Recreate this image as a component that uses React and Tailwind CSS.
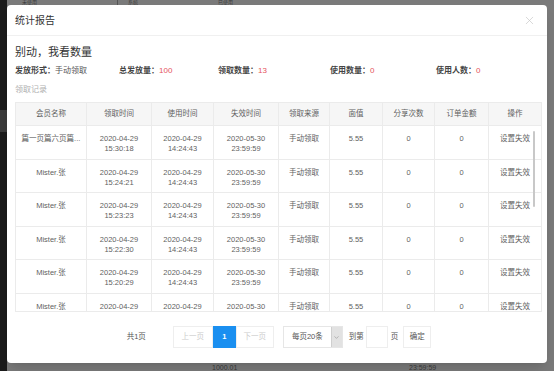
import React from 'react';
import { X, ChevronDown } from 'lucide-react';

const cols = ['会员名称', '领取时间', '使用时间', '失效时间', '领取来源', '面值', '分享次数', '订单金额', '操作'];

const rows = [
  { name: '篇一页篇六页篇...', got: '15:30:18' },
  { name: 'Mister.张', got: '15:24:21' },
  { name: 'Mister.张', got: '15:23:23' },
  { name: 'Mister.张', got: '15:22:30' },
  { name: 'Mister.张', got: '15:20:29' },
  { name: 'Mister.张', got: '15:17:45' },
];

const stats = [
  { label: '发放形式：', value: '手动领取', plain: true, w: 'w-[104px]' },
  { label: '总发放量：', value: '100', w: 'w-[99px]' },
  { label: '领取数量：', value: '13', w: 'w-[112px]' },
  { label: '使用数量：', value: '0', w: 'w-[106px]' },
  { label: '使用人数：', value: '0', w: 'w-[90px]' },
];

const Cell = ({ children, last }) => (
  <div className={`pt-[8px] text-center leading-[10px] ${last ? '' : 'border-r border-[#ebebeb]'}`}>
    {children}
  </div>
);

const App = () => {
  return (
    <div className="relative w-[554px] h-[371px] overflow-hidden bg-[#7a7a7a] font-['Liberation_Sans','Noto_Sans_CJK_SC',sans-serif]">
      {/* page behind the mask */}
      <div className="absolute left-0 top-0 w-[7px] h-full bg-[#1b1b1b]">
        <div className="mt-[110px] h-[22px] bg-[#3a3a3a]" />
      </div>
      <div className="absolute left-[22px] top-0 flex gap-[80px] text-[5px] leading-[5px] text-[#3a3a3a]">
        <span>未使用</span>
        <span className="border-l border-[#555] pl-[10px]">系统</span>
        <span>已使用</span>
      </div>
      <div className="absolute left-[212px] top-[364px] text-[7px] leading-[7px] text-[#3a3a3a]">1000.01</div>
      <div className="absolute left-[409px] top-[364px] text-[7px] leading-[7px] text-[#3a3a3a]">23:59:59</div>

      {/* modal */}
      <div className="absolute left-[7px] top-[5px] w-[540px] h-[358px] bg-white rounded-[4px] shadow-lg flex flex-col">
        <div className="h-[31px] shrink-0 flex items-center justify-between px-[8px] border-b border-[#f0f0f0]">
          <span className="text-[10px] text-[#333]">统计报告</span>
          <X className="w-[13px] h-[13px] text-[#c4c4c4] mr-[3px]" strokeWidth={1.2} />
        </div>

        <div className="pl-[8px] pr-[5px]">
          <div className="mt-[9px] text-[11px] leading-[14px] text-[#333]">别动，我看数量</div>
          <div className="mt-[6px] flex text-[8px] leading-[12px]">
            {stats.map((s) => (
              <div key={s.label} className={`${s.w} shrink-0`}>
                <span className="font-bold text-[#444]">{s.label}</span>
                <span className={s.plain ? 'text-[#555]' : 'text-[#e5535d]'}>{s.value}</span>
              </div>
            ))}
          </div>
          <div className="mt-[7px] text-[8px] leading-[12px] text-[#b0b0b0]">领取记录</div>

          <div className="relative mt-[6px] border border-[#ebebeb] text-[7.5px] text-[#5f5f5f]">
            <div className="grid grid-cols-[71px_65px_62px_65px_51px_53px_52px_54px_52px] h-[23px] bg-[#f6f6f6] border-b border-[#ebebeb]">
              {cols.map((c, i) => (
                <div key={c} className={`flex items-center justify-center ${i < cols.length - 1 ? 'border-r border-[#ebebeb]' : ''}`}>
                  {c}
                </div>
              ))}
            </div>
            <div className="h-[185px] overflow-hidden">
              {rows.map((r, idx) => (
                <div key={idx} className="grid grid-cols-[71px_65px_62px_65px_51px_53px_52px_54px_52px] h-[33.5px] border-b border-[#ebebeb]">
                  <Cell>{r.name}</Cell>
                  <Cell>2020-04-29<br />{r.got}</Cell>
                  <Cell>2020-04-29<br />14:24:43</Cell>
                  <Cell>2020-05-30<br />23:59:59</Cell>
                  <Cell>手动领取</Cell>
                  <Cell>5.55</Cell>
                  <Cell>0</Cell>
                  <Cell>0</Cell>
                  <Cell last>设置失效</Cell>
                </div>
              ))}
            </div>
            <div className="absolute right-[6px] top-[28px] w-[2px] h-[76px] rounded-full bg-[#c8c8c8]" />
          </div>
        </div>

        {/* pagination */}
        <div className="mt-[14px] flex items-center justify-center text-[7.5px] text-[#555] pl-[4px]">
          <span className="mr-[27px]">共1页</span>
          <div className="flex h-[22px]">
            <div className="w-[40px] flex items-center justify-center border border-[#eeeeee] text-[#cccccc]">上一页</div>
            <div className="w-[23px] flex items-center justify-center bg-[#1a8ff0] text-white font-bold">1</div>
            <div className="w-[38px] flex items-center justify-center border border-[#eeeeee] text-[#cccccc]">下一页</div>
          </div>
          <div className="ml-[9px] flex h-[22px] border border-[#e6e6e6]">
            <div className="w-[47px] flex items-center justify-center">每页20条</div>
            <div className="w-[11px] flex items-center justify-center bg-[#e2e2e2] border-l border-[#cfcfcf]">
              <ChevronDown className="w-[7px] h-[7px] text-[#777]" strokeWidth={1.5} />
            </div>
          </div>
          <span className="ml-[6px]">到第</span>
          <div className="ml-[2px] w-[22px] h-[22px] border border-[#eeeeee]" />
          <span className="ml-[3px]">页</span>
          <div className="ml-[5px] w-[28px] h-[22px] flex items-center justify-center border border-[#eeeeee]">确定</div>
        </div>
      </div>
    </div>
  );
};

export default App;
